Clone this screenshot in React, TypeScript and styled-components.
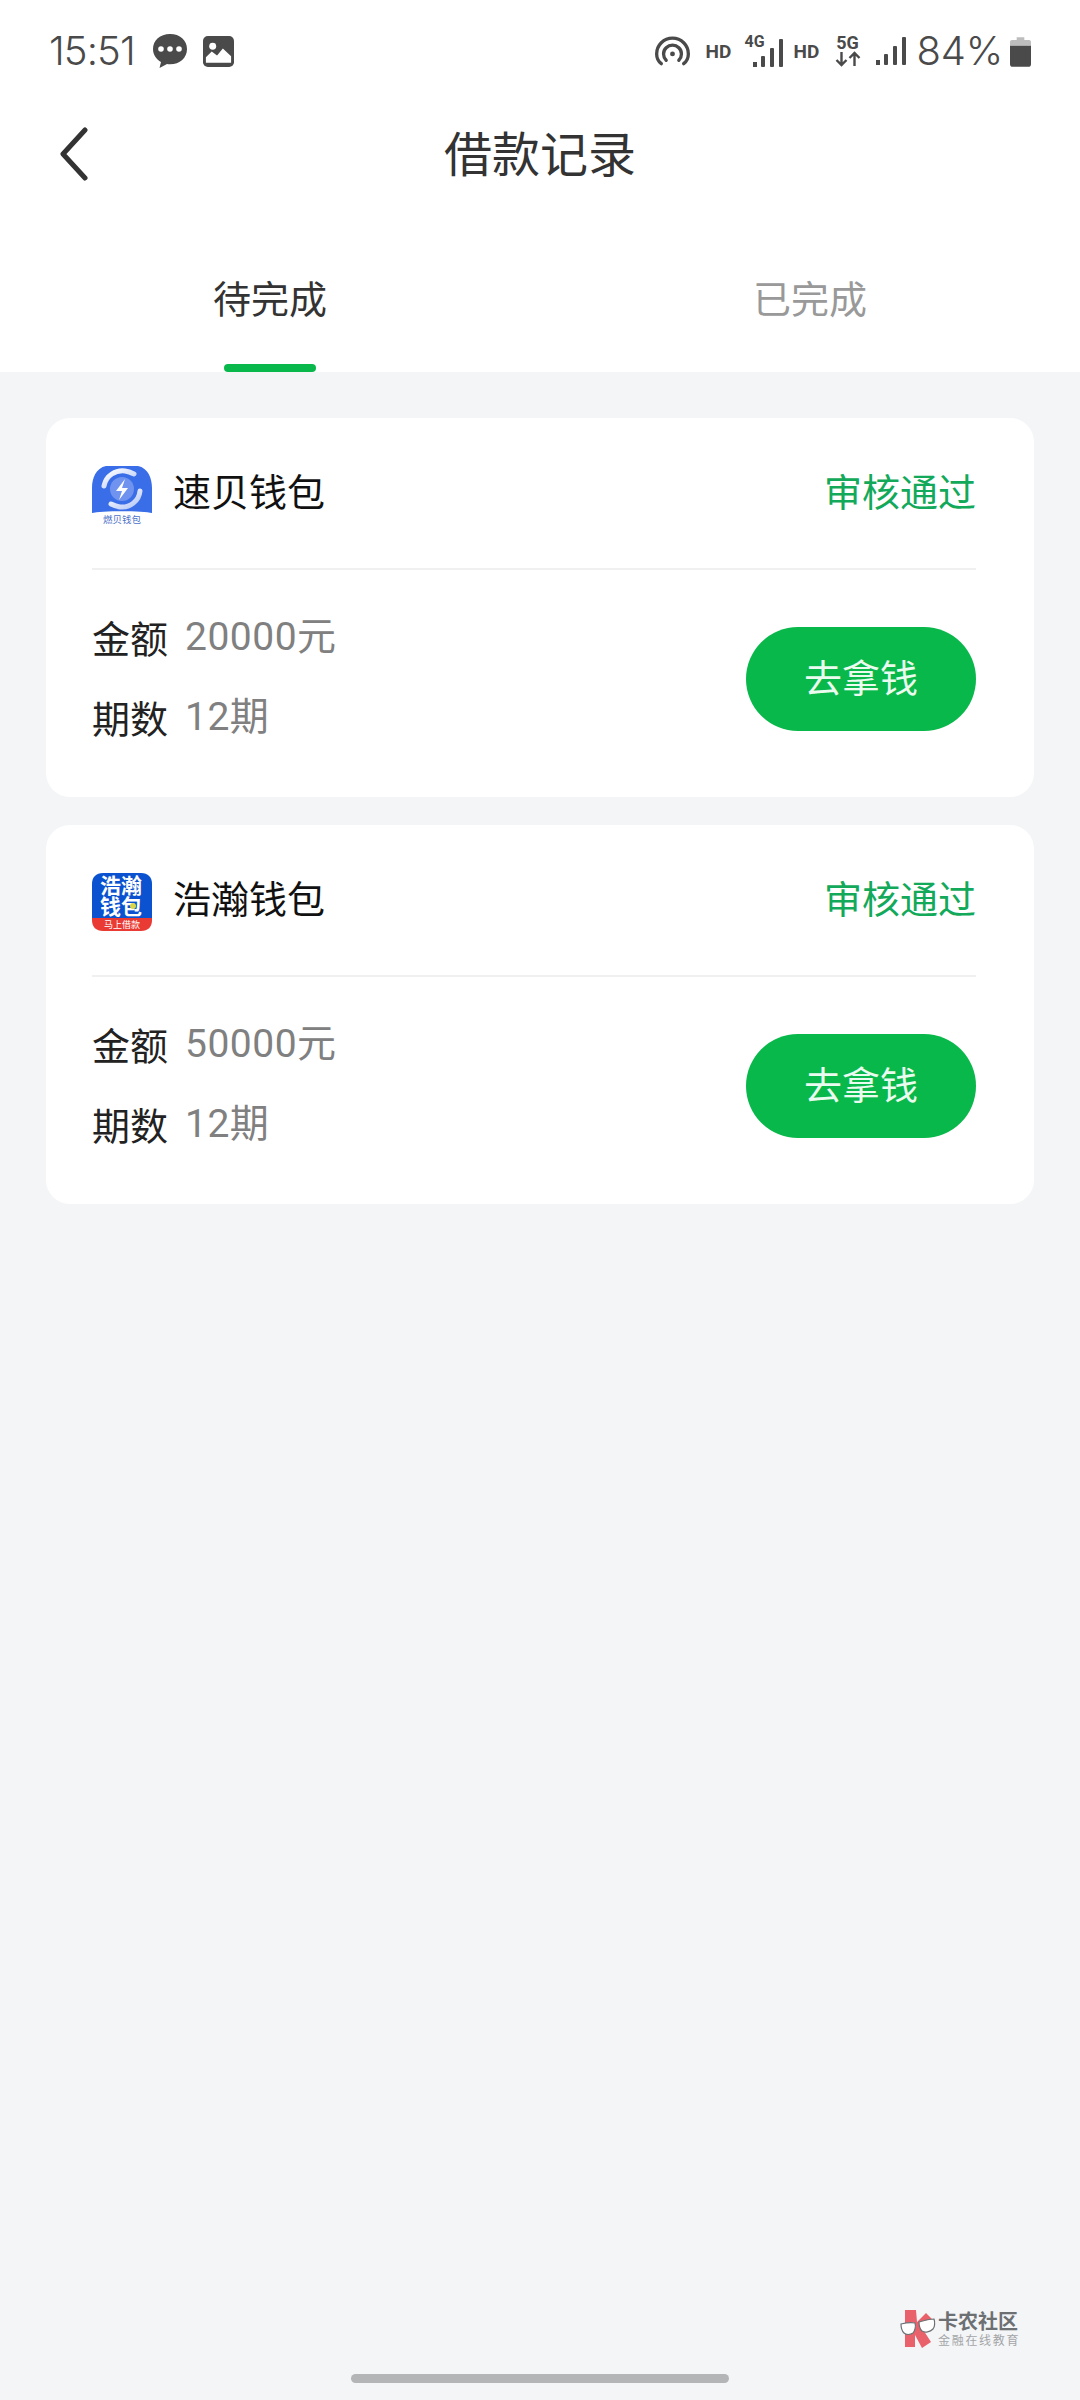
import React from "react";
import styled, { createGlobalStyle } from "styled-components";

const CJK = `"Noto Sans CJK SC", "Noto Sans", sans-serif`;
const Global = createGlobalStyle`
  html, body { margin: 0; padding: 0; background: #f4f5f7; }
  * { box-sizing: border-box; }
`;
const Page = styled.div`
  position: relative; width: 1080px; height: 2400px; background: #f4f5f7;
  font-family: ${CJK}; overflow: hidden;
`;
const Head = styled.header`background: #fff; height: 372px; display: flex; flex-direction: column;`;
const StatusBar = styled.div`
  height: 100px; display: flex; align-items: center; justify-content: space-between;
  padding: 2px 49px 0 49px; color: #4a4a4a;
`;
const StatusLeft = styled.div`display: flex; align-items: center;`;
const StatusRight = styled.div`display: flex; align-items: center;`;
const Clock = styled.span`font: 300 40px/1 Inter, Roboto, sans-serif; letter-spacing: -0.9px; margin-right: 17px;`;
const Percent = styled.span`font: 300 40px/1 Inter, Roboto, sans-serif; letter-spacing: -0.2px; margin: 0 7px 0 11px;`;
const Spaced = styled.span<{ $left?: number }>`
  display: flex; align-items: center; flex: none; margin-left: ${(p) => p.$left ?? 0}px;
`;
const HDLabel = styled.span<{ $left: number }>`
  font: 700 19px/20px Roboto, sans-serif; color: #4a4a4a; margin-left: ${(p) => p.$left}px; width: 27px;
  position: relative; top: 1px;
`;
const SignalStack = styled.span`position: relative; display: block; width: 38px; height: 32px; margin-left: 12px; flex: none;`;
const SignalTag = styled.span`
  position: absolute; left: 0; top: 0; font: 700 16px/14px Roboto, sans-serif; color: #4a4a4a;
`;
const SignalBars = styled.svg`position: absolute; right: 0; bottom: 0;`;
const NetStack = styled.span`display: flex; flex-direction: column; align-items: center; margin-left: 14px; width: 26px; flex: none;`;
const NetTag = styled.span`font: 700 18px/16px Roboto, sans-serif; color: #4a4a4a;`;
const NavBar = styled.div`
  height: 110px; display: flex; align-items: center; justify-content: center; position: relative;
`;
const Back = styled.svg`position: absolute; left: 57px; top: 27px;`;
const Title = styled.h1`margin: 0; font-size: 48px; font-weight: 400; color: #333; line-height: 1; position: relative; top: -4px;`;
const Tabs = styled.div`flex: 1; display: flex; padding-top: 26px;`;
const Tab = styled.div<{ $active?: boolean }>`
  width: 50%; height: 136px; padding-top: 33px; text-align: center; position: relative;
  font-size: 38px; line-height: 56px;
  color: ${(p) => (p.$active ? "#333" : "#999")};
  &::after {
    content: ""; display: ${(p) => (p.$active ? "block" : "none")}; position: absolute;
    left: 50%; transform: translateX(-50%); bottom: 0; width: 92px; height: 8px;
    border-radius: 4px; background: #09b84a;
  }
`;
const List = styled.main`padding: 46px 46px 0; display: flex; flex-direction: column; gap: 28px;`;
const Card = styled.section`background: #fff; border-radius: 24px; height: 379px; padding: 0 58px 0 46px;`;
const CardHead = styled.div`
  height: 152px; display: flex; align-items: center; border-bottom: 2px solid #f0f0f0; gap: 21px;
  padding-top: 4px;
`;
const Logo = styled.svg`flex: none; display: block; overflow: visible;`;
const Name = styled.span`font-size: 38px; color: #111; line-height: 1; position: relative; top: -5px;`;
const Status = styled.span`margin-left: auto; font-size: 38px; color: #12a95a; line-height: 1; position: relative; top: -5px;`;
const CardBody = styled.div`display: flex; justify-content: space-between; align-items: center; height: 225px; padding-bottom: 8px;`;
const Rows = styled.div`display: flex; flex-direction: column; gap: 26px; position: relative; top: -2px;`;
const Row = styled.div`display: flex; align-items: center; gap: 17px; font-size: 38px; line-height: 54px;`;
const RowLabel = styled.span`color: #222;`;
const RowValue = styled.span`
  color: #808080; font-family: Roboto, ${CJK}; font-size: 39px; letter-spacing: 0.5px;
  position: relative; top: 0;
`;
const Action = styled.button`
  width: 230px; height: 104px; border: 0; border-radius: 52px; background: #09b84a; color: #eafbef;
  font: 400 38px/1 ${CJK}; padding: 0 0 6px;
`;
const Watermark = styled.div`
  position: absolute; left: 900px; top: 2309px; display: flex; align-items: center; gap: 2px;
`;
const MarkText = styled.div`display: flex; flex-direction: column; line-height: 1;`;
const MarkMain = styled.span`font-size: 20px; font-weight: 700; color: #6d7073; letter-spacing: 0;`;
const MarkSub = styled.span`font-size: 12px; color: #a3a5a8; letter-spacing: 1.7px; margin-top: 3px;`;
const HomeBar = styled.div`
  position: absolute; left: 351px; top: 2374px; width: 378px; height: 9px; border-radius: 5px; background: #b4b5b7;
`;

const Chat = () => (
  <svg width="36" height="36" viewBox="0 0 36 36" style={{ flex: "none" }}>
    <path d="M18 1C8 1 1 7.500 1 16c0 6 3.500 10.500 8 13l-1.500 6 7.500-4c1 .2 2 .3 3 .3 10 0 17-6.500 17-15.300S28 1 18 1z" fill="#4a4a4a" />
    <circle cx="9" cy="16" r="2.800" fill="#fff" />
    <circle cx="18" cy="16" r="2.800" fill="#fff" />
    <circle cx="27" cy="16" r="2.800" fill="#fff" />
  </svg>
);
const Pic = () => (
  <svg width="31" height="31" viewBox="0 0 32 32">
    <rect width="32" height="32" rx="5" fill="#4a4a4a" />
    <circle cx="10" cy="10.500" r="3.600" fill="#fff" />
    <path d="M3 27.500v-5.500l6-6 5.500 4 6-7 8.500 8v6.500z" fill="#fff" />
  </svg>
);
const Hotspot = () => (
  <svg width="35" height="30" viewBox="0 0 36 30" fill="none" stroke="#4a4a4a" strokeWidth="3.400" strokeLinecap="round">
    <path d="M6.500 28C2 24.500 1.700 19.500 1.700 18 1.700 9 9 1.800 18 1.800S34.300 9 34.300 18c0 1.500-.3 6.500-4.800 10" />
    <path d="M11.500 24.500C9.500 22.500 8.800 20.500 8.800 18c0-5 4.200-9 9.200-9s9.200 4 9.200 9c0 2.500-.7 4.500-2.700 6.500" />
    <circle cx="18" cy="18" r="2.500" fill="#4a4a4a" stroke="none" />
  </svg>
);
const Bars = () => (
  <g fill="#4a4a4a">
    <rect x="0" y="23" width="4" height="5" />
    <rect x="8" y="17" width="4" height="11" rx="1" />
    <rect x="17" y="9" width="4" height="19" rx="1" />
    <rect x="26" y="0" width="4" height="28" rx="1" />
  </g>
);
const Battery = () => (
  <svg width="21" height="31" viewBox="0 0 22 32">
    <path d="M7 1h8v3h5a2 2 0 0 1 2 2v4H0V6a2 2 0 0 1 2-2h5z" fill="#bdbdbd" />
    <path d="M0 10h22v19a3 3 0 0 1-3 3H3a3 3 0 0 1-3-3z" fill="#4a4a4a" />
  </svg>
);

const SuBeiLogo = () => (
  <Logo width="60" height="58" viewBox="0 0 60 58">
    <defs>
      <linearGradient id="ring" x1="0" y1="0" x2="1" y2="1">
        <stop offset="0" stopColor="#ffffff" />
        <stop offset="1" stopColor="#b4c6f6" />
      </linearGradient>
    </defs>
    <path d="M0 47V22C0 12 4 2 14 0h32c10 2 14 12 14 22v25c-8-2.500-52-2.500-60 0z" fill="#3a6ee8" />
    <circle cx="30" cy="23" r="12" fill="#6f93ee" />
    <path d="M12 20C14 9 24 4 33 5c4 .5 7 2 9 3" fill="none" stroke="url(#ring)" strokeWidth="5" strokeLinecap="round" />
    <path d="M48 25C47 35 38 42 28 41c-4-.5-7-2-9-3" fill="none" stroke="url(#ring)" strokeWidth="5" strokeLinecap="round" />
    <path d="M33 13l-9 12h6l-3 9 9-12h-6z" fill="#fff" />
    <text x="30" y="56.500" textAnchor="middle" fontSize="9.500" fill="#4b6fc8" fontFamily={CJK}>燃贝钱包</text>
  </Logo>
);
const HaoHanLogo = () => (
  <Logo width="60" height="58" viewBox="0 0 60 58">
    <path d="M0 45V11C0 4 4 0 11 0h38c7 0 11 4 11 11v34z" fill="#0a52cf" />
    <path d="M0 45h60v2c0 7-4 11-11 11H11C4 58 0 54 0 47z" fill="#ea3a34" />
    <text fontSize="21" fontWeight="700" fill="#fff" fontFamily={CJK}>
      <tspan x="8" y="20">浩瀚</tspan>
      <tspan x="8" y="41">钱包</tspan>
    </text>
    <circle cx="41" cy="33" r="3" fill="#d7d64a" />
    <text x="30" y="55" textAnchor="middle" fontSize="9" fill="#fff" fontFamily={CJK}>马上借款</text>
  </Logo>
);
const MarkLogo = () => (
  <svg width="36" height="39" viewBox="0 0 36 39">
    <path d="M5 1h11l1 12L26 4l7 7-11 8 9 14-9 6-7-13v12H5z" fill="#e9616a" />
    <path d="M1 15c4-1 10-2 14-1 1 3 0 8-2 10-3 2-7 2-9 0-2-2-3-6-3-9z" fill="#fff" stroke="#6d7073" strokeWidth="1.200" />
    <path d="M19 13c4-1 10-3 15-3 1 3 1 8-1 10-3 3-8 4-11 2-2-2-3-6-3-9z" fill="#fff" stroke="#6d7073" strokeWidth="1.200" />
  </svg>
);

const records = [
  { name: "速贝钱包", amount: "20000元", logo: <SuBeiLogo /> },
  { name: "浩瀚钱包", amount: "50000元", logo: <HaoHanLogo /> },
];

export default function App() {
  return (
    <Page>
      <Global />
      <Head>
        <StatusBar>
          <StatusLeft>
            <Clock>15:51</Clock>
            <Chat />
            <Spaced $left={15}><Pic /></Spaced>
          </StatusLeft>
          <StatusRight>
            <Hotspot />
            <HDLabel $left={16}>HD</HDLabel>
            <SignalStack>
              <SignalTag>4G</SignalTag>
              <SignalBars width="30" height="28" viewBox="0 0 30 28"><Bars /></SignalBars>
            </SignalStack>
            <HDLabel $left={11}>HD</HDLabel>
            <NetStack>
              <NetTag>5G</NetTag>
              <svg width="26" height="16" viewBox="0 0 26 16">
                <path d="M6.500 1v13M1.500 9l5 5 5-5M19.500 15V2M14.500 7l5-5 5 5" fill="none" stroke="#4a4a4a" strokeWidth="2.400" />
              </svg>
            </NetStack>
            <Spaced $left={15}>
              <svg width="30" height="28" viewBox="0 0 30 28"><Bars /></svg>
            </Spaced>
            <Percent>84%</Percent>
            <Battery />
          </StatusRight>
        </StatusBar>
        <NavBar>
          <Back width="34" height="56" viewBox="0 0 34 56" fill="none" stroke="#333" strokeWidth="5" strokeLinecap="round" strokeLinejoin="round">
            <path d="M28 3L6 27l22 24" />
          </Back>
          <Title>借款记录</Title>
        </NavBar>
        <Tabs>
          <Tab $active>待完成</Tab>
          <Tab>已完成</Tab>
        </Tabs>
      </Head>
      <List>
        {records.map((r) => (
          <Card key={r.name}>
            <CardHead>
              {r.logo}
              <Name>{r.name}</Name>
              <Status>审核通过</Status>
            </CardHead>
            <CardBody>
              <Rows>
                <Row><RowLabel>金额</RowLabel><RowValue>{r.amount}</RowValue></Row>
                <Row><RowLabel>期数</RowLabel><RowValue>12期</RowValue></Row>
              </Rows>
              <Action>去拿钱</Action>
            </CardBody>
          </Card>
        ))}
      </List>
      <Watermark>
        <MarkLogo />
        <MarkText>
          <MarkMain>卡农社区</MarkMain>
          <MarkSub>金融在线教育</MarkSub>
        </MarkText>
      </Watermark>
      <HomeBar />
    </Page>
  );
}
